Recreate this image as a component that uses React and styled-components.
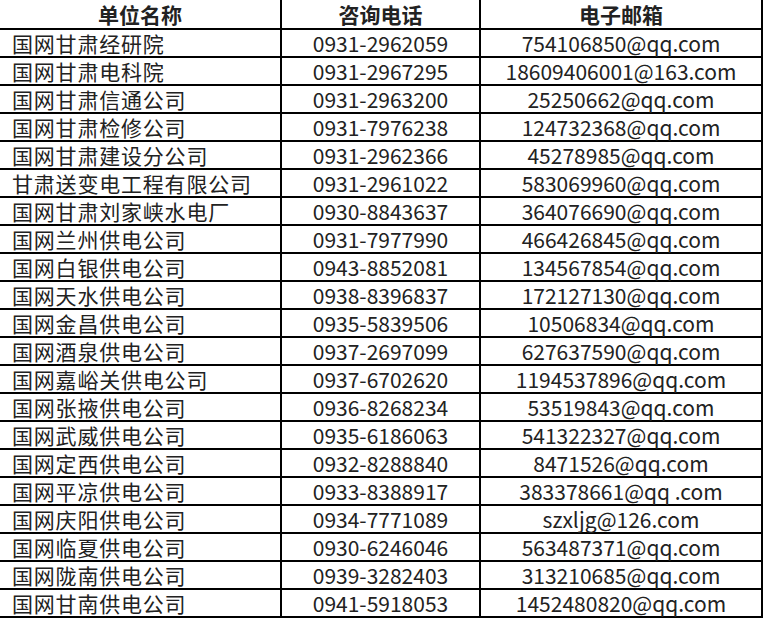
import React from "react";
import styled, { createGlobalStyle } from "styled-components";

const rows = [
  ["国网甘肃经研院", "0931-2962059", "754106850@qq.com"],
  ["国网甘肃电科院", "0931-2967295", "18609406001@163.com"],
  ["国网甘肃信通公司", "0931-2963200", "25250662@qq.com"],
  ["国网甘肃检修公司", "0931-7976238", "124732368@qq.com"],
  ["国网甘肃建设分公司", "0931-2962366", "45278985@qq.com"],
  ["甘肃送变电工程有限公司", "0931-2961022", "583069960@qq.com"],
  ["国网甘肃刘家峡水电厂", "0930-8843637", "364076690@qq.com"],
  ["国网兰州供电公司", "0931-7977990", "466426845@qq.com"],
  ["国网白银供电公司", "0943-8852081", "134567854@qq.com"],
  ["国网天水供电公司", "0938-8396837", "172127130@qq.com"],
  ["国网金昌供电公司", "0935-5839506", "10506834@qq.com"],
  ["国网酒泉供电公司", "0937-2697099", "627637590@qq.com"],
  ["国网嘉峪关供电公司", "0937-6702620", "1194537896@qq.com"],
  ["国网张掖供电公司", "0936-8268234", "53519843@qq.com"],
  ["国网武威供电公司", "0935-6186063", "541322327@qq.com"],
  ["国网定西供电公司", "0932-8288840", "8471526@qq.com"],
  ["国网平凉供电公司", "0933-8388917", "383378661@qq .com"],
  ["国网庆阳供电公司", "0934-7771089", "szxljg@126.com"],
  ["国网临夏供电公司", "0930-6246046", "563487371@qq.com"],
  ["国网陇南供电公司", "0939-3282403", "313210685@qq.com"],
  ["国网甘南供电公司", "0941-5918053", "1452480820@qq.com"],
];

const GlobalStyle = createGlobalStyle`
  body {
    margin: 0;
    background: #fff;
    font-family: "Noto Sans CJK SC", "Noto Sans", sans-serif;
  }
`;

const Sheet = styled.div`
  display: grid;
  grid-template-columns: 282px 199px 282px;
  width: 763px;
  color: #222;
`;

const Cell = styled.div`
  box-sizing: border-box;
  height: ${(p) => (p.$head ? 30 : 28)}px;
  border-right: 2px solid #000;
  border-bottom: 2px solid #000;
  display: flex;
  align-items: center;
  justify-content: ${(p) => (p.$left ? "flex-start" : "center")};
  padding-left: ${(p) => (p.$left ? "12px" : "0")};
  font-size: 21px;
  letter-spacing: ${(p) => (p.$left ? "0.8px" : "0")};
  font-weight: ${(p) => (p.$head ? 700 : 400)};
  line-height: 1;
  white-space: nowrap;
`;

export default function App() {
  return (
    <>
      <GlobalStyle />
      <Sheet>
        <Cell $head>单位名称</Cell>
        <Cell $head>咨询电话</Cell>
        <Cell $head>电子邮箱</Cell>
        {rows.map(([name, phone, mail]) => (
          <React.Fragment key={name}>
            <Cell $left>{name}</Cell>
            <Cell>{phone}</Cell>
            <Cell>{mail}</Cell>
          </React.Fragment>
        ))}
      </Sheet>
    </>
  );
}
